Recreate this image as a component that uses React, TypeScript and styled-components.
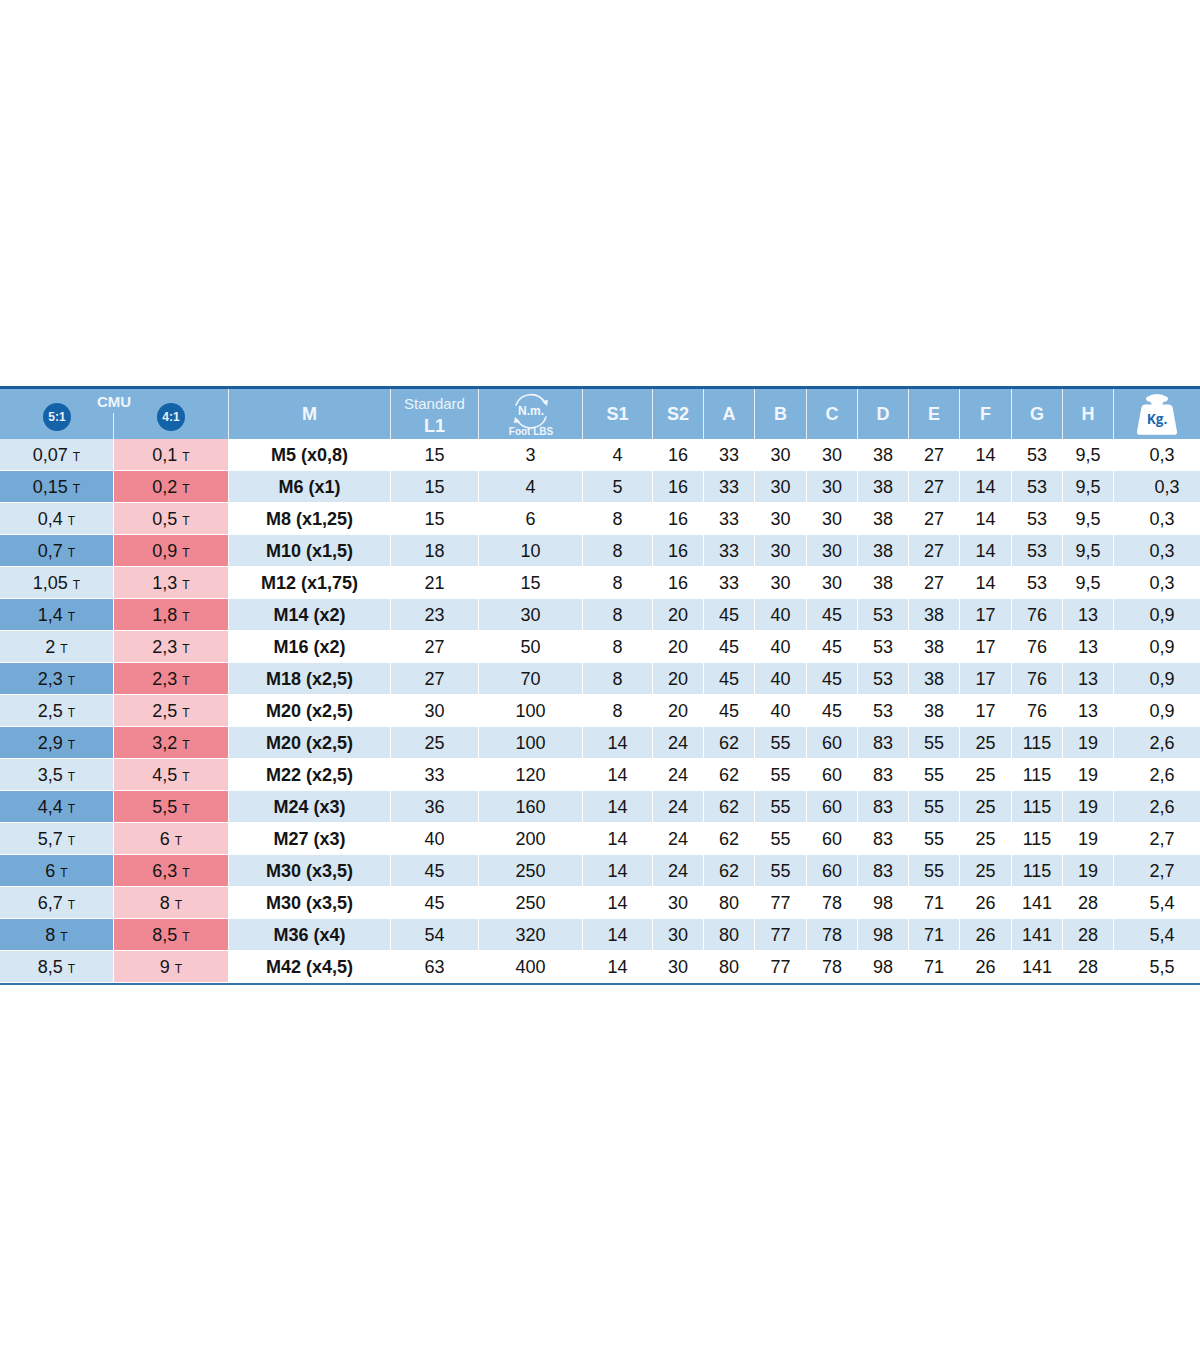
import React from "react";
import styled, { createGlobalStyle } from "styled-components";

const GlobalStyle = createGlobalStyle`
  html, body { margin: 0; padding: 0; background: #ffffff; }
  body { font-family: "Liberation Sans", Arial, sans-serif; }
`;

const COLS = "114px 115px 162px 88px 104px 70px 51px 51px 52px 51px 51px 51px 52px 51px 51px 86px";
const HEAD_COLS = "229px 162px 88px 104px 70px 51px 51px 52px 51px 51px 51px 52px 51px 51px 86px";

const Page = styled.div`
  width: 1200px;
  height: 1372px;
  padding-top: 386px;
  box-sizing: border-box;
  background: #ffffff;
`;

const Table = styled.div`
  width: 1200px;
  border-top: 3px solid #1c5e9c;
  border-bottom: 2px solid #3573ad;
`;

const HeaderRow = styled.div`
  display: grid;
  grid-template-columns: ${HEAD_COLS};
  grid-template-rows: 50px;
  height: 50px;
  background: #80b3dc;
  overflow: hidden;
`;

const HeaderCell = styled.div<{ $last?: boolean; $top?: number }>`
  box-sizing: border-box;
  border-right: ${(p) => (p.$last ? "none" : "1px solid #e4eff8")};
  display: flex;
  flex-direction: column;
  align-items: center;
  justify-content: center;
  color: #f1f7fc;
  font-weight: bold;
  font-size: 18px;
  line-height: 1;
  padding-top: ${(p) => p.$top ?? 0}px;
  padding-bottom: 1px;
`;

const CmuCell = styled.div`
  box-sizing: border-box;
  border-right: 1px solid #e4eff8;
  display: grid;
  grid-template-columns: 114px 114px;
  grid-template-rows: 24px 26px;
  position: relative;
`;

const CmuLabel = styled.div`
  grid-column: 1 / 3;
  grid-row: 1;
  align-self: start;
  text-align: center;
  color: #eef5fb;
  font-weight: bold;
  font-size: 15px;
  line-height: 1;
  padding-top: 5px;
  z-index: 1;
`;

const RatioSlot = styled.div<{ $second?: boolean }>`
  grid-row: 1 / 3;
  grid-column: ${(p) => (p.$second ? "2" : "1")};
  display: flex;
  align-items: center;
  justify-content: center;
  padding-top: 6px;
  padding-left: ${(p) => (p.$second ? "0" : "0")};
  box-sizing: border-box;
`;

const Divider = styled.div`
  position: absolute;
  left: 113px;
  top: 24px;
  bottom: 0;
  width: 1px;
  background: #e4eff8;
`;

const Ratio = styled.div`
  width: 28px;
  height: 28px;
  border-radius: 50%;
  background: #1462a7;
  color: #e8f1fa;
  font-size: 12px;
  font-weight: bold;
  display: flex;
  align-items: center;
  justify-content: center;
`;

const StdLabel = styled.span`
  font-weight: normal;
  font-size: 15px;
  margin-bottom: 6px;
  color: #eaf3fb;
`;

const BodyRow = styled.div`
  display: grid;
  grid-template-columns: ${COLS};
  height: 32px;
`;

type Kind = "c1" | "c2" | "data";

const colors: Record<Kind, [string, string]> = {
  c1: ["#d7e6f3", "#75aad7"],
  c2: ["#f8c8cf", "#ef8893"],
  data: ["#ffffff", "#d7e6f3"],
};

const Cell = styled.div<{ $kind: Kind; $alt: boolean; $last?: boolean; $bold?: boolean; $shift?: number }>`
  box-sizing: border-box;
  background: ${(p) => colors[p.$kind][p.$alt ? 1 : 0]};
  border-right: ${(p) => (p.$last ? "none" : "1px solid #ffffff")};
  border-bottom: 1px solid #ffffff;
  display: flex;
  align-items: center;
  justify-content: center;
  padding-left: ${(p) => p.$shift ?? 0}px;
  padding-top: 1px;
  font-size: 18px;
  font-weight: ${(p) => (p.$bold ? "bold" : "normal")};
  color: #141414;
  white-space: nowrap;
`;

const Ton = styled.span`
  font-size: 12px;
  margin-left: 5px;
  padding-top: 3px;
`;

const NmIcon = () => (
  <svg width="48" height="47" viewBox="0 0 48 47" style={{ display: "block" }}>
    <g fill="none" stroke="#f1f7fc" strokeWidth="1.6" strokeLinecap="round">
      <path d="M9 15 A16 16 0 0 1 38 13" />
      <path d="M39 27 A16 16 0 0 1 10 30" />
    </g>
    <path d="M35 11 L41 10 L40 16 Z" fill="#f1f7fc" />
    <path d="M13 32 L7 33 L8 27 Z" fill="#f1f7fc" />
    <text x="24" y="25" textAnchor="middle" fontFamily="Liberation Sans, Arial, sans-serif" fontWeight="bold" fontSize="12" fill="#f1f7fc">N.m.</text>
    <text x="24" y="45" textAnchor="middle" fontFamily="Liberation Sans, Arial, sans-serif" fontSize="10" fill="#eef5fb">Foot LBS</text>
  </svg>
);

const KgIcon = () => (
  <svg width="46" height="46" viewBox="0 0 44 44" style={{ display: "block" }}>
    <path
      d="M12 5 Q22 -1 32 5 Q34 9 28 9.5 L27 12 L33 12 Q36 12 37 15 L41 37 Q42 41 38 41 L6 41 Q2 41 3 37 L7 15 Q8 12 11 12 L17 12 L16 9.5 Q10 9 12 5 Z"
      fill="#ffffff"
    />
    <text x="22" y="31" textAnchor="middle" fontFamily="Open Sans, Liberation Sans, sans-serif" fontWeight="bold" fontSize="13" fill="#1e69ad">Kg.</text>
  </svg>
);

const rows: string[][] = [
  ["0,07", "0,1", "M5 (x0,8)", "15", "3", "4", "16", "33", "30", "30", "38", "27", "14", "53", "9,5", "0,3"],
  ["0,15", "0,2", "M6 (x1)", "15", "4", "5", "16", "33", "30", "30", "38", "27", "14", "53", "9,5", "0,3"],
  ["0,4", "0,5", "M8 (x1,25)", "15", "6", "8", "16", "33", "30", "30", "38", "27", "14", "53", "9,5", "0,3"],
  ["0,7", "0,9", "M10 (x1,5)", "18", "10", "8", "16", "33", "30", "30", "38", "27", "14", "53", "9,5", "0,3"],
  ["1,05", "1,3", "M12 (x1,75)", "21", "15", "8", "16", "33", "30", "30", "38", "27", "14", "53", "9,5", "0,3"],
  ["1,4", "1,8", "M14 (x2)", "23", "30", "8", "20", "45", "40", "45", "53", "38", "17", "76", "13", "0,9"],
  ["2", "2,3", "M16 (x2)", "27", "50", "8", "20", "45", "40", "45", "53", "38", "17", "76", "13", "0,9"],
  ["2,3", "2,3", "M18 (x2,5)", "27", "70", "8", "20", "45", "40", "45", "53", "38", "17", "76", "13", "0,9"],
  ["2,5", "2,5", "M20 (x2,5)", "30", "100", "8", "20", "45", "40", "45", "53", "38", "17", "76", "13", "0,9"],
  ["2,9", "3,2", "M20 (x2,5)", "25", "100", "14", "24", "62", "55", "60", "83", "55", "25", "115", "19", "2,6"],
  ["3,5", "4,5", "M22 (x2,5)", "33", "120", "14", "24", "62", "55", "60", "83", "55", "25", "115", "19", "2,6"],
  ["4,4", "5,5", "M24 (x3)", "36", "160", "14", "24", "62", "55", "60", "83", "55", "25", "115", "19", "2,6"],
  ["5,7", "6", "M27 (x3)", "40", "200", "14", "24", "62", "55", "60", "83", "55", "25", "115", "19", "2,7"],
  ["6", "6,3", "M30 (x3,5)", "45", "250", "14", "24", "62", "55", "60", "83", "55", "25", "115", "19", "2,7"],
  ["6,7", "8", "M30 (x3,5)", "45", "250", "14", "30", "80", "77", "78", "98", "71", "26", "141", "28", "5,4"],
  ["8", "8,5", "M36 (x4)", "54", "320", "14", "30", "80", "77", "78", "98", "71", "26", "141", "28", "5,4"],
  ["8,5", "9", "M42 (x4,5)", "63", "400", "14", "30", "80", "77", "78", "98", "71", "26", "141", "28", "5,5"],
];

const letters = ["S1", "S2", "A", "B", "C", "D", "E", "F", "G", "H"];

export default function App() {
  return (
    <>
      <GlobalStyle />
      <Page>
        <Table>
          <HeaderRow>
            <CmuCell>
              <RatioSlot>
                <Ratio>5:1</Ratio>
              </RatioSlot>
              <RatioSlot $second>
                <Ratio>4:1</Ratio>
              </RatioSlot>
              <CmuLabel>CMU</CmuLabel>
              <Divider />
            </CmuCell>
            <HeaderCell>M</HeaderCell>
            <HeaderCell $top={4}>
              <StdLabel>Standard</StdLabel>
              L1
            </HeaderCell>
            <HeaderCell>
              <NmIcon />
            </HeaderCell>
            {letters.map((l) => (
              <HeaderCell key={l}>{l}</HeaderCell>
            ))}
            <HeaderCell $last $top={2}>
              <KgIcon />
            </HeaderCell>
          </HeaderRow>
          {rows.map((r, i) => {
            const alt = i % 2 === 1;
            return (
              <BodyRow key={i}>
                {r.map((v, j) => {
                  const kind: Kind = j === 0 ? "c1" : j === 1 ? "c2" : "data";
                  const last = j === r.length - 1;
                  return (
                    <Cell
                      key={j}
                      $kind={kind}
                      $alt={alt}
                      $last={last}
                      $bold={j === 2}
                      $shift={last ? (i === 1 ? 20 : 10) : 0}
                    >
                      {v}
                      {j < 2 && <Ton>T</Ton>}
                    </Cell>
                  );
                })}
              </BodyRow>
            );
          })}
        </Table>
      </Page>
    </>
  );
}
